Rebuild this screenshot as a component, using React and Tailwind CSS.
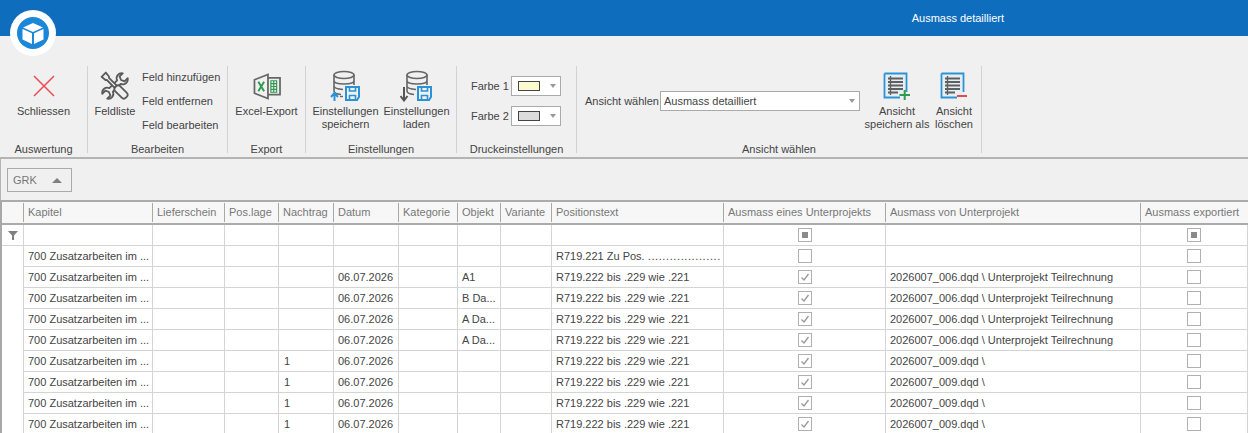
const COLS = "grid-cols-[22px_129px_72px_54px_55px_65px_59px_43px_51px_172px_162px_255px_107px]";

const HEADERS = [
  "Kapitel",
  "Lieferschein",
  "Pos.lage",
  "Nachtrag",
  "Datum",
  "Kategorie",
  "Objekt",
  "Variante",
  "Positionstext",
  "Ausmass eines Unterprojekts",
  "Ausmass von Unterprojekt",
  "Ausmass exportiert",
];

const KAPITEL = "700 Zusatzarbeiten im ...";
const POS = "R719.222 bis .229 wie .221";
const SUB6 = "2026007_006.dqd \\ Unterprojekt Teilrechnung";
const SUB9 = "2026007_009.dqd \\";

const ROWS = [
  { nachtrag: "", datum: "", objekt: "", dots: true, checked: false, sub: "" },
  { nachtrag: "", datum: "06.07.2026", objekt: "A1", pos: POS, checked: true, sub: SUB6 },
  { nachtrag: "", datum: "06.07.2026", objekt: "B Da...", pos: POS, checked: true, sub: SUB6 },
  { nachtrag: "", datum: "06.07.2026", objekt: "A Da...", pos: POS, checked: true, sub: SUB6 },
  { nachtrag: "", datum: "06.07.2026", objekt: "A Da...", pos: POS, checked: true, sub: SUB6 },
  { nachtrag: "1", datum: "06.07.2026", objekt: "", pos: POS, checked: true, sub: SUB9 },
  { nachtrag: "1", datum: "06.07.2026", objekt: "", pos: POS, checked: true, sub: SUB9 },
  { nachtrag: "1", datum: "06.07.2026", objekt: "", pos: POS, checked: true, sub: SUB9 },
  { nachtrag: "1", datum: "06.07.2026", objekt: "", pos: POS, checked: true, sub: SUB9 },
];

function Logo() {
  return (
    <div className="absolute left-[10px] top-[10px] flex h-[46px] w-[46px] items-center justify-center rounded-full bg-white">
      <svg width="32" height="32" viewBox="0 0 32 32">
        <circle cx="16" cy="16" r="16" fill="#1b87d8" />
        <path d="M16 6 L26 10.5 L16 15 L6 10.5 Z" fill="#fff" />
        <path d="M5.5 12 L15 16.3 V27 L5.5 22.5 Z" fill="#fff" />
        <path d="M26.5 12 L17 16.3 V27 L26.5 22.5 Z" fill="#fff" />
      </svg>
    </div>
  );
}

function CloseIcon() {
  return (
    <svg width="24" height="24" viewBox="0 0 24 24">
      <path d="M2 2 L22 22 M22 2 L2 22" stroke="#f0484f" strokeWidth="1.5" fill="none" />
    </svg>
  );
}

function ToolsIcon() {
  return (
    <svg width="30" height="30" viewBox="0 0 30 30" fill="#f0f0f0" stroke="#5a5a5a" strokeWidth="1.8" strokeLinejoin="round">
      <g transform="rotate(45 15 15)">
        <path d="M12.5 9.5 C8.5 8 8 3 11.5 0.5 V5 L15 6.5 L18.5 5 V0.5 C22 3 21.5 8 17.5 9.5 V20.5 C21.5 22 22 27 18.5 29.5 V25 L15 23.5 L11.5 25 V29.5 C8 27 8.5 22 12.5 20.5 Z" />
      </g>
      <g transform="rotate(-45 15 15)">
        <path d="M12 -1 H18 L17.5 4 L16.5 5 V16 H13.5 V5 L12.5 4 Z" />
        <rect x="11.5" y="16" width="7" height="15" rx="3" />
      </g>
    </svg>
  );
}

function ExcelIcon() {
  return (
    <svg width="30" height="27" viewBox="0 0 30 28" fill="none">
      <path d="M16 5 H28.5 V22.5 H16" stroke="#666" strokeWidth="1.8" />
      <path d="M2 7 L16 1.5 V26.5 L2 21 Z" stroke="#666" strokeWidth="1.8" fill="#f0f0f0" />
      <path d="M6 9 L12 19 M12 9 L6 19" stroke="#2e9b4f" strokeWidth="2" />
      <path d="M19 8 H25 V20 H19 Z M19 11 H25 M19 14 H25 M19 17 H25 M22 8 V20" stroke="#2e9b4f" strokeWidth="1.2" />
    </svg>
  );
}

function Floppy() {
  return (
    <g>
      <path d="M17 17 H30 V27 L28 30 H17 Z" fill="#f0f0f0" stroke="#2a93d8" strokeWidth="2" />
      <path d="M20.5 17 V21 H26.5 V17 M20.5 30 V25.5 H26.5 V30" fill="none" stroke="#2a93d8" strokeWidth="1.6" />
    </g>
  );
}

function DbBody() {
  return (
    <g fill="none" stroke="#666" strokeWidth="1.6">
      <ellipse cx="15" cy="5" rx="10" ry="3.5" />
      <path d="M5 5 V21 C5 23 8 24 12 24.5 M25 5 V15 M5 10.5 C5 13 10 14 15 14 C20 14 25 13 25 10.5 M5 16 C5 18 8 19 14 19.5" />
    </g>
  );
}

function DbSaveIcon() {
  return (
    <svg width="34" height="32" viewBox="0 0 34 32">
      <DbBody />
      <path d="M5.5 31 V24 M2 27 L5.5 23 L9 27" fill="none" stroke="#2a93d8" strokeWidth="2" />
      <path d="M11 26.5 H14" stroke="#666" strokeWidth="1.4" />
      <Floppy />
    </svg>
  );
}

function DbLoadIcon() {
  return (
    <svg width="34" height="32" viewBox="0 0 34 32">
      <g transform="translate(2 0)">
        <DbBody />
      </g>
      <path d="M4 17 V30 M0.5 26 L4 30.5 L7.5 26" fill="none" stroke="#555" strokeWidth="2" />
      <g transform="translate(1 0)">
        <Floppy />
      </g>
    </svg>
  );
}

function ListIcon({ kind }) {
  return (
    <svg width="28" height="28" viewBox="0 0 28 28" fill="none">
      <path d="M1.5 1.5 H23.5 V20 M1.5 1.5 V25.5 H17" stroke="#2a93d8" strokeWidth="1.8" />
      <rect x="3" y="3" width="19" height="21" fill="#e6eef4" />
      <path d="M5 6.5 H20 M5 10 H20 M5 13.5 H20 M5 17 H20 M5 20.5 H15" stroke="#5f5f5f" strokeWidth="1.8" />
      <path d="M7.5 4 V23" stroke="#5f5f5f" strokeWidth="1.4" />
      {kind === "add" ? (
        <path d="M16.5 23 H27 M21.7 18 V28" stroke="#2e9b4f" strokeWidth="2" />
      ) : (
        <path d="M17 24 H27" stroke="#e8494f" strokeWidth="2" />
      )}
    </svg>
  );
}

function Arrow() {
  return <span className="h-0 w-0 border-x-[3.5px] border-t-[4px] border-x-transparent border-t-[#999]" />;
}

function Group({ label, width, children }) {
  return (
    <div className={`flex h-[87px] shrink-0 flex-col border-r border-[#d2d2d2] ${width}`}>
      <div className="h-[76px] shrink-0">{children}</div>
      <div className="h-[11px] shrink-0 text-center leading-[14px]">{label}</div>
    </div>
  );
}

function BigButton({ icon, lines, width, iconHeight = "h-[39px]" }) {
  return (
    <div className={`flex shrink-0 flex-col items-center ${width}`}>
      <div className={`flex items-center justify-center ${iconHeight}`}>{icon}</div>
      <div className="text-center leading-[13px] whitespace-nowrap">
        {lines.map((l) => (
          <div key={l}>{l}</div>
        ))}
      </div>
    </div>
  );
}

function ColorPick({ label, swatch }) {
  return (
    <div className="flex items-center">
      <span className="w-[40px] whitespace-nowrap">{label}</span>
      <div className="flex h-[20px] w-[50px] items-center justify-between border border-[#aaa] bg-white pr-[4px] pl-[6px]">
        <span className={`h-[10px] w-[22px] border border-[#444] ${swatch}`} />
        <Arrow />
      </div>
    </div>
  );
}

function Ribbon() {
  return (
    <div className="flex h-[121px] bg-[#f0f0f0] pt-[30px] text-[#444]">
      <Group label="Auswertung" width="w-[88px]">
        <BigButton width="w-[87px]" icon={<CloseIcon />} lines={["Schliessen"]} iconHeight="h-[38px] mt-[1px]" />
      </Group>
      <Group label="Bearbeiten" width="w-[140px]">
        <div className="flex">
          <BigButton width="w-[54px]" icon={<ToolsIcon />} lines={["Feldliste"]} iconHeight="h-[38px] mt-[1px]" />
          <div className="flex flex-col gap-[11px] pt-[5px] whitespace-nowrap leading-[13px]">
            <div>Feld hinzufügen</div>
            <div>Feld entfernen</div>
            <div>Feld bearbeiten</div>
          </div>
        </div>
      </Group>
      <Group label="Export" width="w-[78px]">
        <BigButton width="w-[77px]" icon={<ExcelIcon />} lines={["Excel-Export"]} iconHeight="h-[38px] mt-[1px]" />
      </Group>
      <Group label="Einstellungen" width="w-[151px]">
        <div className="flex pl-[4px]">
          <BigButton width="w-[71px]" icon={<DbSaveIcon />} lines={["Einstellungen", "speichern"]} />
          <BigButton width="w-[71px]" icon={<DbLoadIcon />} lines={["Einstellungen", "laden"]} />
        </div>
      </Group>
      <Group label="Druckeinstellungen" width="w-[120px]">
        <div className="flex flex-col gap-[10px] pt-[10px] pl-[14px]">
          <ColorPick label="Farbe 1" swatch="bg-[#fbfbd0]" />
          <ColorPick label="Farbe 2" swatch="bg-[#dcdcdc]" />
        </div>
      </Group>
      <Group label="Ansicht wählen" width="w-[405px]">
        <div className="flex">
          <div className="flex w-[288px] items-center self-start pt-[25px] pl-[8px]">
            <span className="w-[75px] whitespace-nowrap">Ansicht wählen</span>
            <div className="flex h-[20px] w-[200px] items-center justify-between border border-[#aaa] bg-white pr-[4px] pl-[3px]">
              <span>Ausmass detailliert</span>
              <Arrow />
            </div>
          </div>
          <BigButton width="w-[64px]" icon={<ListIcon kind="add" />} lines={["Ansicht", "speichern als"]} />
          <BigButton width="w-[50px]" icon={<ListIcon kind="del" />} lines={["Ansicht", "löschen"]} />
        </div>
      </Group>
    </div>
  );
}

function Box({ state }) {
  return (
    <span className="flex h-[14px] w-[14px] items-center justify-center border border-[#b0b0b0] bg-white">
      {state === "mixed" && <span className="h-[6px] w-[6px] bg-[#8a8a8a]" />}
      {state === "on" && (
        <svg width="10" height="10" viewBox="0 0 10 10">
          <path d="M1.5 5.5 L4 8 L8.5 2" fill="none" stroke="#999" strokeWidth="1.3" />
        </svg>
      )}
    </span>
  );
}

function Cell({ children, center }) {
  return (
    <div className={`flex h-[21px] items-center overflow-hidden border-r border-b border-[#d4d4d4] whitespace-nowrap ${center ? "justify-center" : "pl-[4px]"}`}>
      {children}
    </div>
  );
}

function GridTable() {
  return (
    <div className="border-l-2 border-[#a8a8a8] text-[#444]">
      <div className={`grid h-[23px] border-b-2 border-[#ababab] bg-[#f7f7f7] text-[#777] ${COLS}`}>
        <div className="h-[19px] self-center border-r border-[#a8a8a8]" />
        {HEADERS.map((h, i) => (
          <div key={h} className={`flex h-[19px] items-center self-center pl-[4px] whitespace-nowrap ${i < 11 ? "border-r border-[#a8a8a8]" : ""}`}>
            {h}
          </div>
        ))}
      </div>
      <div className={`grid ${COLS}`}>
        <Cell center>
          <svg width="10" height="9" viewBox="0 0 10 9">
            <path d="M0 0 H10 L6 4.5 V9 H4 V4.5 Z" fill="#808080" />
          </svg>
        </Cell>
        {HEADERS.map((h, i) => (
          <Cell key={h} center={i === 9 || i === 11}>
            {i === 9 || i === 11 ? <Box state="mixed" /> : null}
          </Cell>
        ))}
      </div>
      {ROWS.map((r, i) => (
        <div key={i} className={`grid ${COLS}`}>
          <div className="h-[21px] border-r border-[#d4d4d4]" />
          <Cell>{KAPITEL}</Cell>
          <Cell />
          <Cell />
          <Cell>
            <span className="pl-[1px]">{r.nachtrag}</span>
          </Cell>
          <Cell>{r.datum}</Cell>
          <Cell />
          <Cell>{r.objekt}</Cell>
          <Cell />
          <Cell>
            {r.dots ? (
              <span>
                R719.221 Zu Pos. <span className="tracking-[0.6px]">....................</span>
              </span>
            ) : (
              r.pos
            )}
          </Cell>
          <Cell center>
            <Box state={r.checked ? "on" : "off"} />
          </Cell>
          <Cell>{r.sub}</Cell>
          <Cell center>
            <Box state="off" />
          </Cell>
        </div>
      ))}
    </div>
  );
}

export default function App() {
  return (
    <div className="relative h-[433px] w-[1248px] overflow-hidden bg-white font-['Liberation_Sans',sans-serif] text-[11px]">
      <div className="flex h-[36px] items-center justify-end bg-[#0f6dbd] pr-[244px] text-white">Ausmass detailliert</div>
      <Logo />
      <Ribbon />
      <div className="h-[2px] bg-[#b4b4b4]" />
      <div className="flex h-[41px] items-start border-l border-[#b4b4b4] bg-[#f0f0f0] pt-[9px] pl-[6px]">
        <div className="flex h-[24px] w-[65px] items-center justify-between border border-[#aaa] pr-[9px] pl-[5px] text-[#777]">
          GRK
          <span className="h-0 w-0 border-x-[5px] border-b-[5px] border-x-transparent border-b-[#808080]" />
        </div>
      </div>
      <div className="h-[2px] bg-[#ababab]" />
      <GridTable />
    </div>
  );
}
